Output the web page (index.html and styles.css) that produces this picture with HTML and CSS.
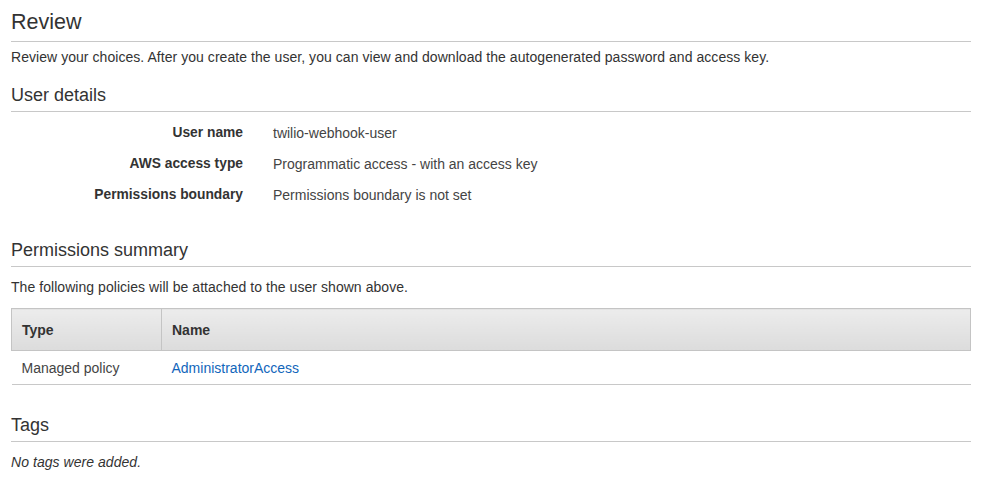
FILE: index.html
```html
<!DOCTYPE html>
<html>
<head>
<meta charset="utf-8">
<link rel="stylesheet" href="styles.css">
</head>
<body>
<div class="page">
  <h1 class="title">Review</h1>
  <p class="intro">Review your choices. After you create the user, you can view and download the autogenerated password and access key.</p>

  <h2 class="section">User details</h2>
  <div class="details">
    <div class="row"><div class="label">User name</div><div class="value">twilio-webhook-user</div></div>
    <div class="row"><div class="label">AWS access type</div><div class="value">Programmatic access - with an access key</div></div>
    <div class="row"><div class="label">Permissions boundary</div><div class="value">Permissions boundary is not set</div></div>
  </div>

  <h2 class="section section-perm">Permissions summary</h2>
  <p class="intro intro-sub">The following policies will be attached to the user shown above.</p>
  <table class="policies">
    <thead>
      <tr><th class="col-type">Type</th><th>Name</th></tr>
    </thead>
    <tbody>
      <tr><td>Managed policy</td><td><a class="link" href="#">AdministratorAccess</a></td></tr>
    </tbody>
  </table>

  <h2 class="section section-tags">Tags</h2>
  <p class="intro intro-sub empty">No tags were added.</p>
</div>
</body>
</html>
```
FILE: styles.css
```css
html, body {
  margin: 0;
  padding: 0;
  background: #ffffff;
}
body {
  font-family: "Liberation Sans", Arial, Helvetica, sans-serif;
  color: #444444;
}
.page {
  width: 960px;
  margin-left: 11px;
  padding-top: 10px;
}
.title {
  margin: 0;
  font-size: 21.5px;
  line-height: 24px;
  font-weight: normal;
  color: #333333;
  padding-bottom: 7px;
  border-bottom: 1px solid #c8c8c8;
}
.intro {
  margin: 7px 0 0 0;
  font-size: 14px;
  line-height: 16px;
  letter-spacing: 0.05px;
  color: #333333;
}
.intro-sub {
  margin-top: 12px;
}
.section {
  margin: 20px 0 0 0;
  font-size: 18px;
  line-height: 20px;
  font-weight: normal;
  color: #333333;
  padding-bottom: 6px;
  border-bottom: 1px solid #c8c8c8;
}
.details {
  padding-top: 5px;
}
.row {
  display: flex;
  height: 31px;
  align-items: center;
  font-size: 14px;
}
.label {
  width: 232px;
  text-align: right;
  font-weight: bold;
  font-size: 13.8px;
  color: #333333;
}
.value {
  margin-left: 30px;
  color: #444444;
}
.section-perm {
  margin-top: 30px;
}
.policies {
  margin-top: 13px;
  width: 960px;
  border-collapse: collapse;
  font-size: 14px;
}
.policies th {
  height: 41px;
  text-align: left;
  padding: 0 10px;
  font-weight: bold;
  color: #333333;
  background: linear-gradient(#ececec, #dcdcdc);
  border: 1px solid #c4c4c4;
}
.policies .col-type {
  width: 129px;
}
.policies td {
  height: 33px;
  padding: 0 10px;
  color: #444444;
  border-bottom: 1px solid #c8c8c8;
}
.link {
  color: #1166bb;
  text-decoration: none;
}
.section-tags {
  margin-top: 30px;
}
.empty {
  font-style: italic;
}
```
